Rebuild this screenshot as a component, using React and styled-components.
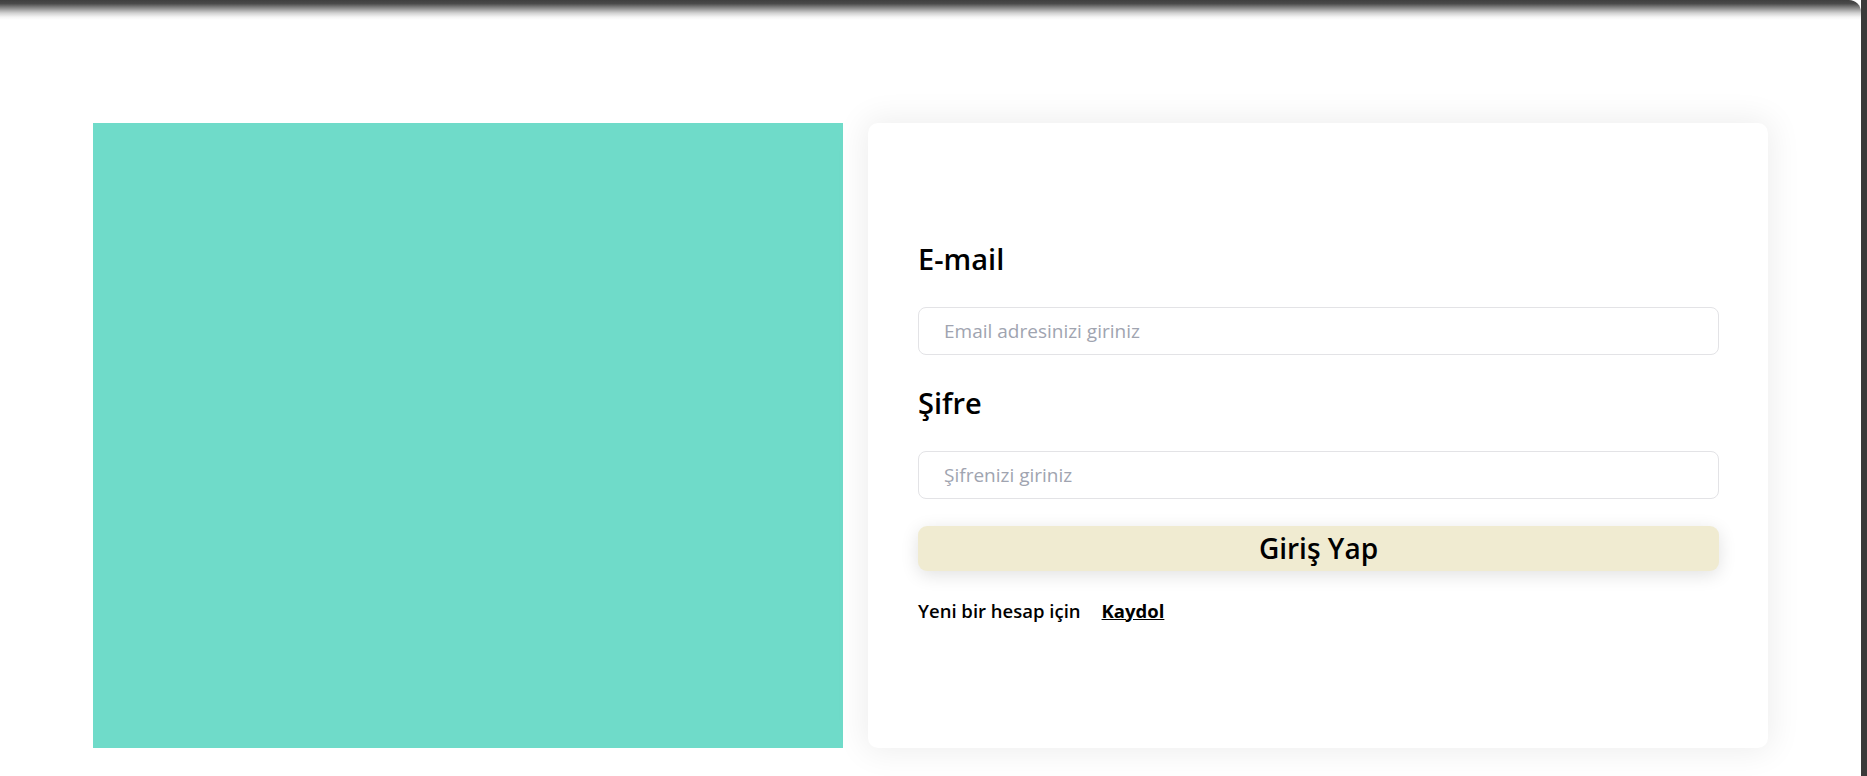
import React, { useState } from "react";
import styled, { createGlobalStyle } from "styled-components";

const GlobalStyle = createGlobalStyle`
  html, body {
    margin: 0;
    padding: 0;
    background: #fff;
  }
  body {
    font-family: "Open Sans", "Noto Sans", "Liberation Sans", sans-serif;
    color: #000;
  }
  input, button { font-family: inherit; }
`;

const Page = styled.div`
  display: flex;
  min-height: 776px;
`;

const Main = styled.div`
  flex: 1;
  display: flex;
  flex-direction: column;
`;

const TopShade = styled.div`
  height: 20px;
  border-top-right-radius: 12px;
  background: linear-gradient(
    to bottom,
    #3f3f3f 0%,
    #4a4a4a 18%,
    #8a8a8a 40%,
    #d0d0d0 65%,
    #f4f4f4 85%,
    #fff 100%
  );
`;

const EdgeStrip = styled.div`
  width: 6px;
  background: #3a3a3a;
`;

const Container = styled.div`
  width: 90%;
  margin: 103px auto 0;
  display: flex;
  gap: 25px;
  height: 625px;
`;

const ColorPanel = styled.div`
  flex: 0 0 750px;
  background: #6fdbc9;
`;

const Card = styled.div`
  flex: 1;
  background: #fff;
  border-radius: 10px;
  box-shadow: 0 0 32px 4px rgba(0, 0, 0, 0.07);
  padding: 119px 49px 0 50px;
  display: flex;
  flex-direction: column;
`;

const Label = styled.label`
  display: block;
  font-size: 29px;
  font-weight: 600;
  line-height: 1.2;
  margin: ${(p) => (p.$first ? "0" : "31px")} 0 30px;
`;

const Input = styled.input`
  box-sizing: border-box;
  width: 100%;
  height: 48px;
  border: 1px solid #e3e3e6;
  border-radius: 8px;
  padding: 0 25px;
  font-size: 19px;
  outline: 0;
  background: #fff;
  &::placeholder {
    color: #a0a4b0;
  }
`;

const SubmitButton = styled.button`
  margin-top: 27px;
  height: 45px;
  border: 0;
  border-radius: 9px;
  background: #f0ebd1;
  box-shadow: 0 4px 18px rgba(0, 0, 0, 0.12);
  font-size: 28px;
  font-weight: 600;
  color: #000;
  cursor: pointer;
`;

const SignupRow = styled.div`
  margin-top: 29px;
  display: flex;
  align-items: baseline;
  gap: 21px;
  font-size: 18.5px;
  font-weight: 600;
  line-height: 1.2;
`;

const SignupLink = styled.a`
  font-weight: 700;
  color: #000;
  text-decoration: underline;
  cursor: pointer;
`;

export default function App() {
  const [email, setEmail] = useState("");
  const [password, setPassword] = useState("");

  return (
    <Page>
      <GlobalStyle />
      <Main>
        <TopShade />
        <Container>
          <ColorPanel />
          <Card>
            <Label $first htmlFor="email">E-mail</Label>
            <Input
              id="email"
              value={email}
              onChange={(e) => setEmail(e.target.value)}
              placeholder="Email adresinizi giriniz"
            />
            <Label htmlFor="pw">Şifre</Label>
            <Input
              id="pw"
              type="password"
              value={password}
              onChange={(e) => setPassword(e.target.value)}
              placeholder="Şifrenizi giriniz"
            />
            <SubmitButton type="button">Giriş Yap</SubmitButton>
            <SignupRow>
              <span>Yeni bir hesap için</span>
              <SignupLink>Kaydol</SignupLink>
            </SignupRow>
          </Card>
        </Container>
      </Main>
      <EdgeStrip />
    </Page>
  );
}
